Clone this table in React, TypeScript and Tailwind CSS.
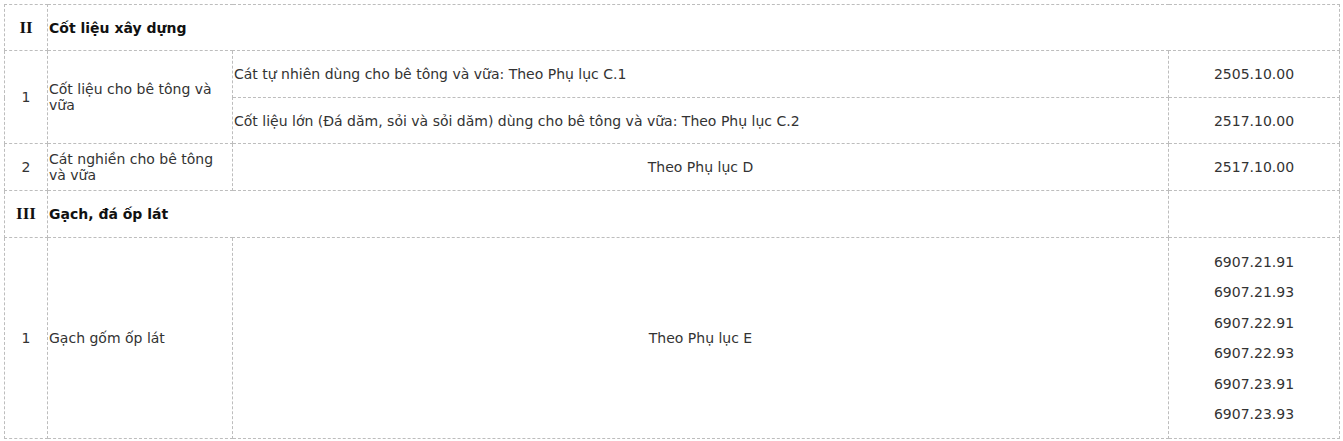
const cell = 'border border-dashed border-[#bdbdbd] p-0 align-middle';

const codes = ['6907.21.91', '6907.21.93', '6907.22.91', '6907.22.93', '6907.23.91', '6907.23.93'];

function Roman({ children }: { children: string }) {
  return (
    <td className={`${cell} text-center font-bold text-[17px] text-[#111] font-['Liberation_Serif',serif]`}>
      {children}
    </td>
  );
}

export default function App() {
  return (
    <div className="bg-white pl-[4px] pt-[4px] font-['DejaVu_Sans',sans-serif] text-[14px] leading-[16px] text-[#333]">
      <table className="border-collapse table-fixed w-[1335px]">
        <colgroup>
          <col className="w-[43px]" />
          <col className="w-[185px]" />
          <col className="w-[936px]" />
          <col className="w-[171px]" />
        </colgroup>
        <tbody>
          <tr className="h-[46px]">
            <Roman>II</Roman>
            <td colSpan={3} className={`${cell} pl-[1px] font-bold text-[#111]`}>
              Cốt liệu xây dựng
            </td>
          </tr>
          <tr className="h-[47px]">
            <td rowSpan={2} className={`${cell} text-center`}>1</td>
            <td rowSpan={2} className={`${cell} pl-[1px]`}>Cốt liệu cho bê tông và vữa</td>
            <td className={`${cell} pl-[1px]`}>Cát tự nhiên dùng cho bê tông và vữa: Theo Phụ lục C.1</td>
            <td className={`${cell} text-center`}>2505.10.00</td>
          </tr>
          <tr className="h-[46px]">
            <td className={`${cell} pl-[1px]`}>
              Cốt liệu lớn (Đá dăm, sỏi và sỏi dăm) dùng cho bê tông và vữa: Theo Phụ lục C.2
            </td>
            <td className={`${cell} text-center`}>2517.10.00</td>
          </tr>
          <tr className="h-[47px]">
            <td className={`${cell} text-center`}>2</td>
            <td className={`${cell} pl-[1px]`}>Cát nghiền cho bê tông và vữa</td>
            <td className={`${cell} text-center`}>Theo Phụ lục D</td>
            <td className={`${cell} text-center`}>2517.10.00</td>
          </tr>
          <tr className="h-[47px]">
            <Roman>III</Roman>
            <td colSpan={2} className={`${cell} pl-[1px] font-bold text-[#111]`}>
              Gạch, đá ốp lát
            </td>
            <td className={cell}></td>
          </tr>
          <tr className="h-[201px]">
            <td className={`${cell} text-center`}>1</td>
            <td className={`${cell} pl-[1px]`}>Gạch gốm ốp lát</td>
            <td className={`${cell} text-center`}>Theo Phụ lục E</td>
            <td className={`${cell} text-center`}>
              <div className="flex flex-col items-center gap-[14.6px]">
                {codes.map((c) => (
                  <p key={c}>{c}</p>
                ))}
              </div>
            </td>
          </tr>
        </tbody>
      </table>
    </div>
  );
}
